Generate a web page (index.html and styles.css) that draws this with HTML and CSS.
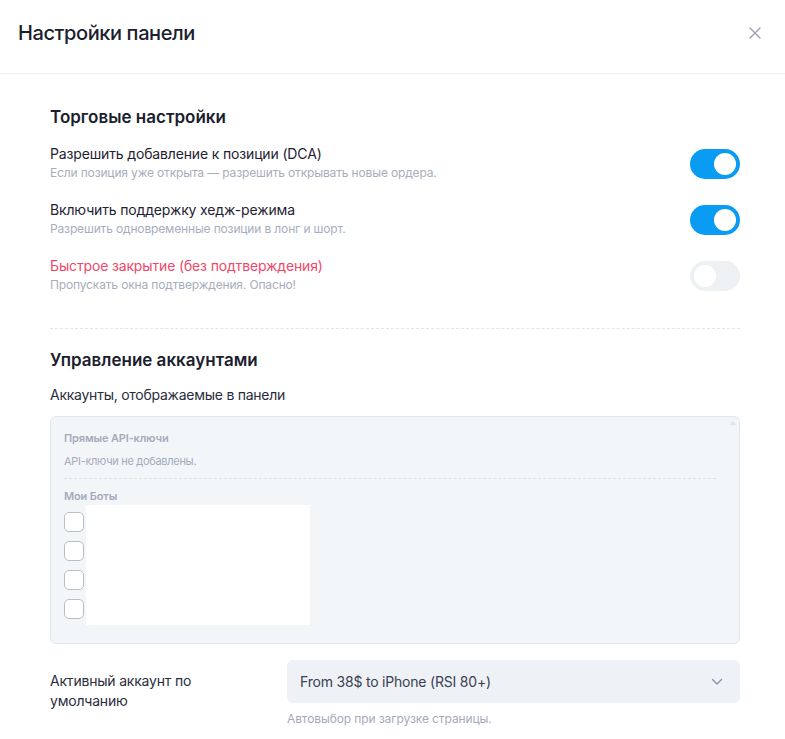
FILE: index.html
```html
<!DOCTYPE html>
<html lang="ru">
<head>
<meta charset="utf-8">
<link rel="stylesheet" href="styles.css">
</head>
<body>
<div class="modal">
  <header class="head">
    <h1 class="title">Настройки панели</h1>
    <button class="close" aria-label="Закрыть">
      <svg width="12" height="12" viewBox="0 0 12 12"><path d="M1 1L11 11M11 1L1 11" stroke="#9aa0b4" stroke-width="1.4" stroke-linecap="round"/></svg>
    </button>
  </header>
  <div class="body">
    <h2 class="section-title">Торговые настройки</h2>
    <div class="rows">
      <div class="row">
        <div class="row-text">
          <div class="label">Разрешить добавление к позиции (DCA)</div>
          <div class="desc">Если позиция уже открыта — разрешить открывать новые ордера.</div>
        </div>
        <span class="toggle on"><span class="knob"></span></span>
      </div>
      <div class="row">
        <div class="row-text">
          <div class="label">Включить поддержку хедж-режима</div>
          <div class="desc">Разрешить одновременные позиции в лонг и шорт.</div>
        </div>
        <span class="toggle on"><span class="knob"></span></span>
      </div>
      <div class="row">
        <div class="row-text">
          <div class="label danger">Быстрое закрытие (без подтверждения)</div>
          <div class="desc">Пропускать окна подтверждения. Опасно!</div>
        </div>
        <span class="toggle"><span class="knob"></span></span>
      </div>
    </div>
    <hr class="divider">
    <h2 class="section-title">Управление аккаунтами</h2>
    <div class="sub-label">Аккаунты, отображаемые в панели</div>
    <div class="accounts">
      <div class="group-title">Прямые API-ключи</div>
      <div class="group-empty">API-ключи не добавлены.</div>
      <hr class="inner-divider">
      <div class="group-title">Мои Боты</div>
      <div class="bots">
        <div class="checks">
          <span class="check"></span>
          <span class="check"></span>
          <span class="check"></span>
          <span class="check"></span>
        </div>
        <div class="bot-names"></div>
      </div>
      <span class="scroll-up"></span>
    </div>
    <div class="default-row">
      <div class="default-label">Активный аккаунт по умолчанию</div>
      <div class="default-field">
        <div class="select">
          <span>From 38$ to iPhone (RSI 80+)</span>
          <svg width="12" height="8" viewBox="0 0 12 8"><path d="M1.5 1.5L6 6L10.5 1.5" fill="none" stroke="#8a90a6" stroke-width="1.4" stroke-linecap="round" stroke-linejoin="round"/></svg>
        </div>
        <div class="hint">Автовыбор при загрузке страницы.</div>
      </div>
    </div>
  </div>
</div>
</body>
</html>
```
FILE: styles.css
```css
* { box-sizing: border-box; }
html, body { margin: 0; padding: 0; background: #fff; }
body {
  font-family: Inter, "Noto Sans", sans-serif;
  color: #1d2033;
  width: 785px;
  height: 739px;
  overflow: hidden;
}
.modal { width: 785px; }
.head {
  height: 74px;
  border-bottom: 1px solid #eceef2;
  display: flex;
  align-items: center;
  justify-content: space-between;
  padding: 0 23px 8px 18px;
}
.title {
  margin: 0;
  font-size: 20px;
  font-weight: 500;
  letter-spacing: -0.4px;
  color: #1b1e2e;
}
.close {
  border: 0;
  background: none;
  padding: 0;
  width: 14px;
  height: 14px;
  display: flex;
  align-items: center;
  justify-content: center;
  cursor: pointer;
}
.body { padding: 32px 45px 0 50px; }
.section-title {
  margin: 0;
  font-size: 17px;
  font-weight: 600;
  letter-spacing: 0;
  color: #1b1e2e;
  line-height: 22px;
}
.rows {
  margin-top: 16px;
  display: flex;
  flex-direction: column;
  gap: 16px;
}
.row {
  display: flex;
  align-items: center;
  justify-content: space-between;
  height: 40px;
}
.row-text { margin-top: -3px; }
.label {
  font-size: 14px;
  line-height: 20px;
  color: #1f2233;
  letter-spacing: -0.15px;
}
.label.danger { color: #f0476a; }
.desc {
  font-size: 12px;
  line-height: 17px;
  color: #a8adbd;
  letter-spacing: -0.15px;
}
.toggle {
  width: 50px;
  height: 30px;
  border-radius: 15px;
  background: #eef1f4;
  position: relative;
  flex: none;
}
.toggle .knob {
  position: absolute;
  top: 4px;
  left: 4px;
  width: 22px;
  height: 22px;
  border-radius: 50%;
  background: #fff;
}
.toggle.on { background: #0a9bf2; }
.toggle.on .knob { left: 24px; }
.divider {
  border: 0;
  border-top: 1px dashed #e2e5ea;
  margin: 32px 0 20px;
}
.sub-label {
  margin-top: 15px;
  font-size: 14px;
  line-height: 18px;
  color: #2a2d3d;
  letter-spacing: -0.25px;
}
.accounts {
  position: relative;
  margin-top: 12px;
  height: 228px;
  background: #f3f6f9;
  border: 1px solid #e2e6ec;
  border-radius: 6px;
  padding: 13px 23px 0 13px;
}
.group-title {
  font-size: 11px;
  font-weight: 600;
  color: #a5aabb;
  line-height: 16px;
  letter-spacing: -0.15px;
}
.group-empty {
  margin-top: 7px;
  font-size: 11px;
  color: #a5aabb;
  line-height: 16px;
  letter-spacing: -0.3px;
}
.inner-divider {
  border: 0;
  border-top: 1px dashed #dde1e7;
  margin: 9px 0 9px;
}
.bots {
  display: flex;
  margin-top: 1px;
}
.checks {
  display: flex;
  flex-direction: column;
  gap: 9px;
  padding-top: 7px;
}
.check {
  width: 20px;
  height: 20px;
  border: 1px solid #b9bdc8;
  border-radius: 5px;
  background: #fff;
}
.bot-names {
  width: 224px;
  height: 120px;
  background: #fff;
  margin-left: 2px;
}
.scroll-up {
  position: absolute;
  top: 4px;
  right: 2px;
  width: 0;
  height: 0;
  border-left: 4px solid transparent;
  border-right: 4px solid transparent;
  border-bottom: 4px solid #e1e5ea;
}
.default-row {
  display: flex;
  margin-top: 16px;
}
.default-label {
  width: 237px;
  padding-top: 11px;
  font-size: 14px;
  line-height: 20px;
  color: #2a2d3d;
  letter-spacing: -0.2px;
  padding-right: 60px;
}
.default-field { flex: 1; }
.select {
  height: 43px;
  background: #eef2f6;
  border-radius: 6px;
  display: flex;
  align-items: center;
  justify-content: space-between;
  padding: 0 17px 0 13px;
  font-size: 14px;
  color: #3a3e50;
  letter-spacing: -0.2px;
}
.hint {
  margin-top: 8px;
  font-size: 12px;
  color: #a5aabb;
  letter-spacing: -0.1px;
}
```
